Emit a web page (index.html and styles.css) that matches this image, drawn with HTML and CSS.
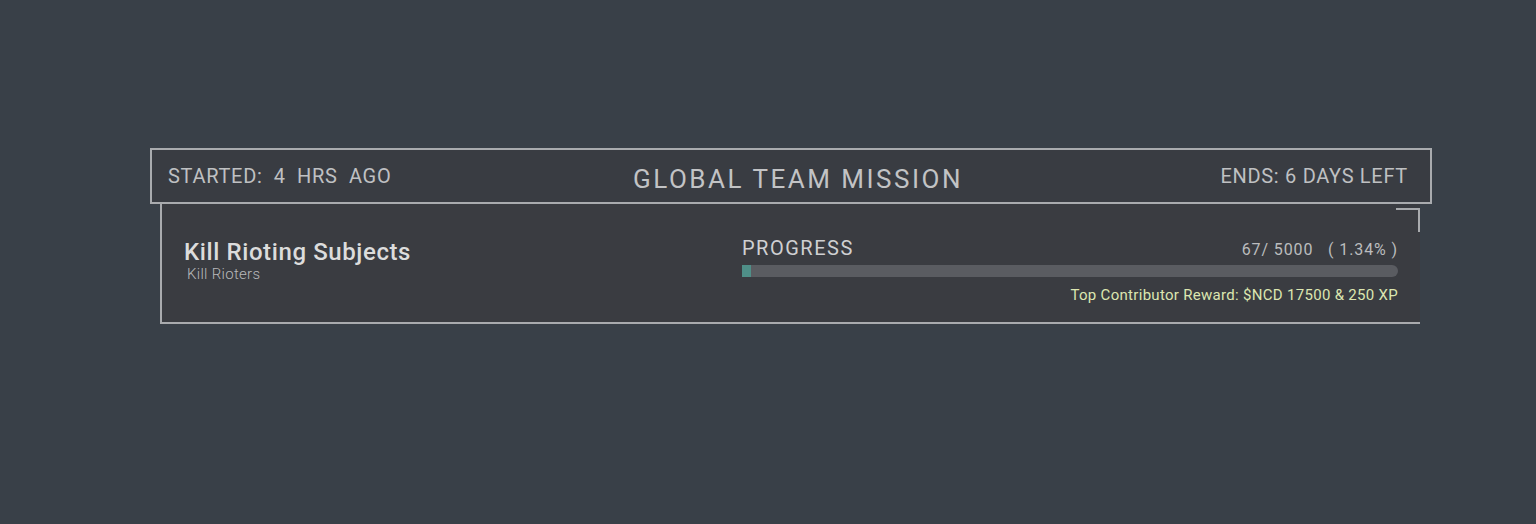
FILE: index.html
```html
<!DOCTYPE html>
<html lang="en">
<head>
  <meta charset="UTF-8">
  <title>Global Team Mission</title>
  <link rel="stylesheet" href="styles.css">
</head>
<body>
  <div class="mission">
    <div class="mission-header">
      <div class="mission-started">STARTED:&nbsp; 4&nbsp; HRS&nbsp; AGO</div>
      <div class="mission-title">GLOBAL TEAM MISSION</div>
      <div class="mission-ends">ENDS: 6 DAYS LEFT</div>
    </div>

    <div class="mission-card">
      <div class="objective">
        <div class="objective-name">Kill Rioting Subjects</div>
        <div class="objective-desc">Kill Rioters</div>
      </div>

      <div class="progress">
        <div class="progress-top">
          <span class="progress-label">PROGRESS</span>
          <span class="progress-count">67/ 5000&nbsp;&nbsp; ( 1.34% )</span>
        </div>
        <div class="progress-bar">
          <div class="progress-fill" style="width: 1.34%"></div>
        </div>
        <div class="progress-reward">Top Contributor Reward: $NCD 17500 &amp; 250 XP</div>
      </div>
    </div>
  </div>
</body>
</html>
```

FILE: styles.css
```css
body {
  margin: 0;
  background: #394048;
  font-family: Roboto, 'Open Sans', sans-serif;
  color: #c4c4c4;
}

.mission {
  display: flex;
  flex-direction: column;
  width: 1282px;
  padding: 148px 0 0 150px;
}

/* Header strip */
.mission-header {
  display: grid;
  grid-template-columns: 1fr auto 1fr;
  align-items: center;
  height: 56px;
  padding: 0 22px 0 16px;
  background: #393c42;
  border: 2px solid #a9abae;
  box-sizing: border-box;
}

.mission-started,
.mission-ends {
  font-size: 20px;
  letter-spacing: 0.7px;
  color: #bfc0c2;
}

.mission-ends {
  text-align: right;
}

.mission-title {
  font-size: 26px;
  letter-spacing: 2.5px;
  color: #c2c3c5;
  padding-top: 6px;
  padding-left: 20px;
}

/* Card body */
.mission-card {
  position: relative;
  display: grid;
  grid-template-columns: 1fr 656px;
  height: 120px;
  margin: 0 12px 0 10px;
  padding: 0 22px;
  background: #3a3c41;
  border-left: 2px solid #a9abae;
  border-bottom: 2px solid #a9abae;
  box-sizing: border-box;
}

.mission-card::after {
  content: '';
  position: absolute;
  top: 4px;
  right: 0;
  width: 22px;
  height: 22px;
  border-top: 2px solid #a9abae;
  border-right: 2px solid #a9abae;
}

.objective {
  padding-top: 34px;
}

.objective-name {
  font-size: 24px;
  font-weight: 500;
  letter-spacing: 0.6px;
  color: #dcdcdc;
  line-height: 28px;
}

.objective-desc {
  font-size: 15px;
  font-weight: 300;
  color: #b8b9bb;
  padding-left: 3px;
  line-height: 16px;
  letter-spacing: 0.3px;
}

.progress {
  display: flex;
  flex-direction: column;
  padding-top: 32px;
}

.progress-top {
  display: flex;
  justify-content: space-between;
  align-items: baseline;
}

.progress-label {
  font-size: 20px;
  letter-spacing: 1.5px;
  color: #cfd0d2;
}

.progress-count {
  font-size: 16px;
  letter-spacing: 0.9px;
  color: #bbbcbe;
}

.progress-bar {
  height: 12px;
  margin-top: 5px;
  background: #5a5c61;
  border-radius: 0 6px 6px 0;
  overflow: hidden;
}

.progress-fill {
  height: 100%;
  min-width: 8px;
  background: #4f8f88;
}

.progress-reward {
  align-self: flex-end;
  margin-top: 9px;
  font-size: 15px;
  letter-spacing: 0.3px;
  color: #dce6b0;
}
```
